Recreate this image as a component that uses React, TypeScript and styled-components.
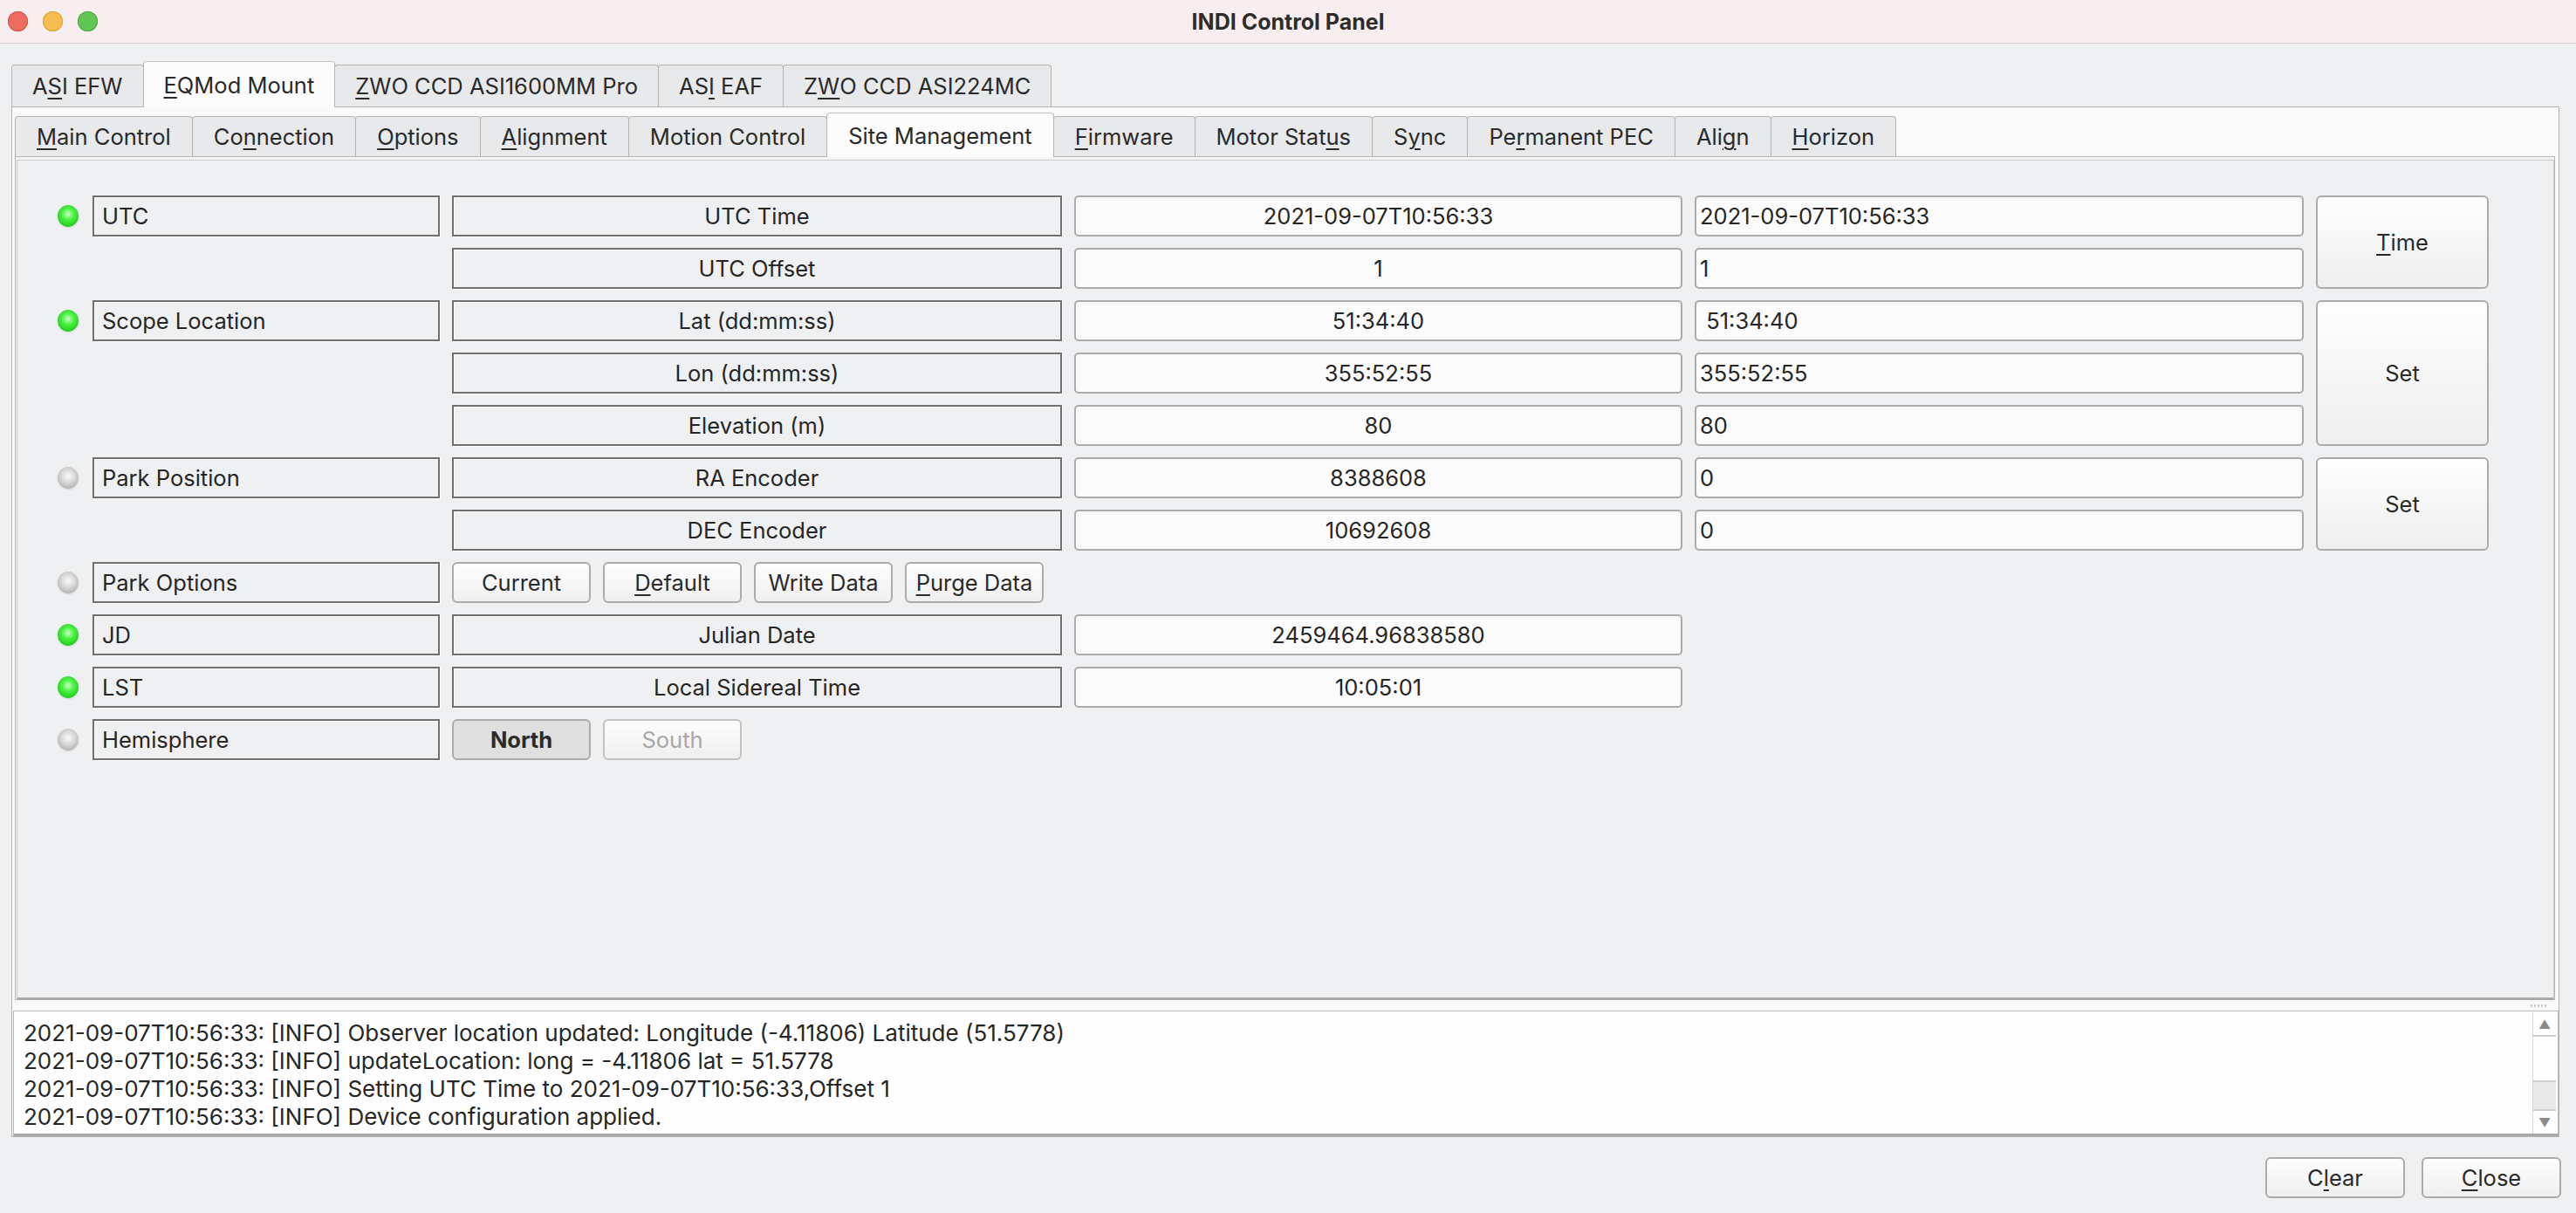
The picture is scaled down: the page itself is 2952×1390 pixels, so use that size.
import React from 'react';
import styled, { createGlobalStyle, css } from 'styled-components';

const GlobalStyle = createGlobalStyle`
  html, body {
    margin: 0;
    padding: 0;
    background: #eff0f2;
  }
  body {
    font-family: Inter, 'Liberation Sans', sans-serif;
    color: #262626;
  }
`;

const Window = styled.div`
  width: 2952px;
  height: 1390px;
  display: flex;
  flex-direction: column;
  background: #eff0f2;
  font-size: 25.5px;
  overflow: hidden;
`;

const TitleBar = styled.div`
  flex: none;
  height: 50px;
  display: grid;
  grid-template-columns: 1fr auto 1fr;
  align-items: center;
  background: #f8eef0;
  border-bottom: 1px solid #d3d1d2;
  box-sizing: border-box;
`;

const Lights = styled.div`
  display: flex;
  gap: 17px;
  padding-left: 9px;
`;

const Light = styled.span<{ $c: string; $b: string }>`
  width: 23px;
  height: 23px;
  border-radius: 50%;
  background: ${(p) => p.$c};
  box-shadow: inset 0 0 0 1px ${(p) => p.$b};
`;

const Title = styled.div`
  font-weight: 700;
  font-size: 25px;
  color: #2d2d2d;
`;

const Body = styled.div`
  flex: 1;
  display: flex;
  flex-direction: column;
  padding: 21px 19px 0 13px;
  min-height: 0;
`;

const TabBar = styled.div<{ $h: number }>`
  flex: none;
  display: flex;
  align-items: flex-end;
  height: ${(p) => p.$h}px;
  position: relative;
  z-index: 1;
`;

const Tab = styled.div<{ $active?: boolean; $h: number; $pad: number }>`
  box-sizing: border-box;
  height: ${(p) => (p.$active ? p.$h + 4 : p.$h)}px;
  padding: 0 ${(p) => p.$pad}px;
  display: flex;
  align-items: center;
  white-space: pre;
  border: 1px solid #b4b4b4;
  border-bottom: none;
  border-radius: 4px 4px 0 0;
  margin-right: -1px;
  background: ${(p) => (p.$active ? '#fcfcfc' : '#e8e9ea')};
  color: #2a2a2a;
  ${(p) =>
    p.$active &&
    css`
      margin-bottom: -1px;
      height: ${p.$h + 5}px;
      border-top-color: #c4c4c4;
    `}
`;

const Mn = styled.span`
  text-decoration: underline;
  text-decoration-thickness: 2px;
  text-underline-offset: 4px;
`;

const OuterPane = styled.div`
  flex: none;
  height: 1181px;
  box-sizing: border-box;
  border: 1px solid #b3b3b3;
  background: #fafafa;
  display: flex;
  flex-direction: column;
  padding: 6px 4px 0 3px;
`;

const InnerPane = styled.div`
  flex: 1;
  display: flex;
  flex-direction: column;
  border: 1px solid #b5b5b5;
  border-bottom: none;
  background: #f4f4f5;
  padding: 3px 0 0 1px;
  min-height: 0;
`;

const Panel = styled.div`
  flex: 1;
  border: 1px solid #cbcbcb;
  border-bottom: 3px solid #a9a9a9;
  background: #eff0f2;
  padding: 40px 0 0 44px;
`;

const Grid = styled.div`
  display: grid;
  grid-template-columns: 28px 398px 699px 697px 698px 198px;
  grid-auto-rows: 47px;
  column-gap: 14px;
  row-gap: 13px;
`;

const Led = styled.span<{ $row: number; $on?: boolean }>`
  grid-column: 1;
  grid-row: ${(p) => p.$row};
  align-self: center;
  justify-self: center;
  width: 24px;
  height: 25px;
  border-radius: 50%;
  background: ${(p) =>
    p.$on
      ? 'radial-gradient(circle at 50% 42%, #c9ffc4 0%, #4cf246 35%, #22cc1f 75%, #5fb55c 100%)'
      : 'radial-gradient(circle at 50% 42%, #fafafa 0%, #d9d9d9 40%, #b0b0b0 80%, #c6c6c6 100%)'};
  box-shadow: 0 1px 2px rgba(0, 0, 0, 0.12);
`;

const etched = css`
  box-sizing: border-box;
  border: 2px solid #707072;
  box-shadow: 1px 1px 0 #ffffff, inset 1px 1px 0 #ffffff;
  background: #eff0f2;
  display: flex;
  align-items: center;
  white-space: pre;
`;

const GroupLabel = styled.div<{ $row: number }>`
  ${etched};
  grid-column: 2;
  grid-row: ${(p) => p.$row};
  padding-left: 9px;
`;

const PropName = styled.div<{ $row: number }>`
  ${etched};
  grid-column: 3;
  grid-row: ${(p) => p.$row};
  justify-content: center;
`;

const field = css`
  box-sizing: border-box;
  border: 2px solid #ababab;
  border-radius: 5px;
  background: #fbfbfb;
  display: flex;
  align-items: center;
  white-space: pre;
`;

const Value = styled.div<{ $row: number }>`
  ${field};
  grid-column: 4;
  grid-row: ${(p) => p.$row};
  justify-content: center;
`;

const Input = styled.div<{ $row: number }>`
  ${field};
  grid-column: 5;
  grid-row: ${(p) => p.$row};
  padding-left: 4px;
`;

const Button = styled.button<{ $pressed?: boolean; $w?: number }>`
  box-sizing: border-box;
  font: inherit;
  color: #2a2a2a;
  border: 2px solid #ababab;
  border-radius: 6px;
  background: linear-gradient(#fefefe, #efefef);
  display: flex;
  align-items: center;
  justify-content: center;
  padding: 0;
  white-space: pre;
  ${(p) => p.$w && `width: ${p.$w}px;`}
  ${(p) =>
    p.$pressed &&
    css`
      background: #dfdfdf;
      font-weight: 700;
    `}
  &:disabled {
    color: #a8a8a8;
    border-color: #c2c2c2;
  }
`;

const ActionButton = styled(Button)<{ $row: number; $span: number }>`
  grid-column: 6;
  grid-row: ${(p) => p.$row} / span ${(p) => p.$span};
`;

const ButtonGroup = styled.div<{ $row: number }>`
  grid-column: 3;
  grid-row: ${(p) => p.$row};
  display: flex;
  gap: 14px;
`;

const Splitter = styled.div`
  flex: none;
  height: 12px;
  display: flex;
  justify-content: flex-end;
  align-items: center;
  padding-right: 10px;
`;

const Grip = styled.span`
  width: 18px;
  height: 3px;
  background: repeating-linear-gradient(90deg, #c8c8c8 0 2px, transparent 2px 4px);
`;

const LogPane = styled.div`
  flex: none;
  height: 144px;
  box-sizing: border-box;
  margin: 0 -4px 0 -2px;
  border: 1px solid #b8b8b8;
  border-bottom: 3px solid #a9a9a9;
  background: #fefefe;
  display: flex;
`;

const LogText = styled.div`
  flex: 1;
  padding: 9px 0 0 11px;
  font-size: 26px;
  line-height: 32px;
  white-space: pre;
`;

const ScrollBar = styled.div`
  width: 26px;
  display: flex;
  flex-direction: column;
  border-left: 1px solid #d8d8d8;
  margin: 1px 2px 0 0;
`;

const Arrow = styled.div`
  height: 26px;
  display: flex;
  align-items: center;
  justify-content: center;
  color: #8a8a8a;
  font-size: 14px;
`;

const Track = styled.div`
  flex: 1;
  display: flex;
  flex-direction: column;
  justify-content: flex-end;
  border-top: 2px solid #cfcfcf;
  border-bottom: 2px solid #cfcfcf;
`;

const Thumb = styled.div`
  height: 31px;
  background: #e9e9e9;
  border-top: 2px solid #cfcfcf;
`;

const Footer = styled.div`
  flex: 1;
  display: flex;
  justify-content: flex-end;
  align-items: flex-start;
  gap: 19px;
  padding-top: 23px;
  margin-right: -2px;
`;

const FooterButton = styled(Button)`
  width: 160px;
  height: 47px;
`;

const outerTabs: { label: React.ReactNode; active?: boolean }[] = [
  { label: <>A<Mn>S</Mn>I EFW</> },
  { label: <><Mn>E</Mn>QMod Mount</>, active: true },
  { label: <><Mn>Z</Mn>WO CCD ASI1600MM Pro</> },
  { label: <>AS<Mn>I</Mn> EAF</> },
  { label: <>Z<Mn>W</Mn>O CCD ASI224MC</> },
];

const innerTabs: { label: React.ReactNode; active?: boolean }[] = [
  { label: <><Mn>M</Mn>ain Control</> },
  { label: <>Co<Mn>n</Mn>nection</> },
  { label: <><Mn>O</Mn>ptions</> },
  { label: <><Mn>A</Mn>lignment</> },
  { label: <>Motion Control</> },
  { label: <>Site Management</>, active: true },
  { label: <><Mn>F</Mn>irmware</> },
  { label: <>Motor Stat<Mn>u</Mn>s</> },
  { label: <>S<Mn>y</Mn>nc</> },
  { label: <>Pe<Mn>r</Mn>manent PEC</> },
  { label: <>Ali<Mn>g</Mn>n</> },
  { label: <><Mn>H</Mn>orizon</> },
];

type Prop = { row: number; name: string; value: string; input: string };

const numbers: Prop[] = [
  { row: 1, name: 'UTC Time', value: '2021-09-07T10:56:33', input: '2021-09-07T10:56:33' },
  { row: 2, name: 'UTC Offset', value: '1', input: '1' },
  { row: 3, name: 'Lat (dd:mm:ss)', value: '51:34:40', input: ' 51:34:40' },
  { row: 4, name: 'Lon (dd:mm:ss)', value: '355:52:55', input: '355:52:55' },
  { row: 5, name: 'Elevation (m)', value: '80', input: '80' },
  { row: 6, name: 'RA Encoder', value: '8388608', input: '0' },
  { row: 7, name: 'DEC Encoder', value: '10692608', input: '0' },
];

const groups: { row: number; label: string; on: boolean }[] = [
  { row: 1, label: 'UTC', on: true },
  { row: 3, label: 'Scope Location', on: true },
  { row: 6, label: 'Park Position', on: false },
  { row: 8, label: 'Park Options', on: false },
  { row: 9, label: 'JD', on: true },
  { row: 10, label: 'LST', on: true },
  { row: 11, label: 'Hemisphere', on: false },
];

const logLines = [
  '2021-09-07T10:56:33: [INFO] Observer location updated: Longitude (-4.11806) Latitude (51.5778)',
  '2021-09-07T10:56:33: [INFO] updateLocation: long = -4.11806 lat = 51.5778',
  '2021-09-07T10:56:33: [INFO] Setting UTC Time to 2021-09-07T10:56:33,Offset 1',
  '2021-09-07T10:56:33: [INFO] Device configuration applied.',
];

const App = () => (
  <>
    <GlobalStyle />
    <Window>
      <TitleBar>
        <Lights>
          <Light $c="#ee6b60" $b="#d9574d" />
          <Light $c="#f6be50" $b="#dea53a" />
          <Light $c="#62c655" $b="#51ad45" />
        </Lights>
        <Title>INDI Control Panel</Title>
        <div />
      </TitleBar>
      <Body>
        <TabBar $h={51}>
          {outerTabs.map((t, i) => (
            <Tab key={i} $h={48} $pad={23} $active={t.active}>
              <span>{t.label}</span>
            </Tab>
          ))}
        </TabBar>
        <OuterPane>
          <TabBar $h={50}>
            {innerTabs.map((t, i) => (
              <Tab key={i} $h={46} $pad={24} $active={t.active}>
                <span>{t.label}</span>
              </Tab>
            ))}
          </TabBar>
          <InnerPane>
            <Panel>
              <Grid>
                {groups.map((g) => (
                  <React.Fragment key={g.row}>
                    <Led $row={g.row} $on={g.on} />
                    <GroupLabel $row={g.row}>{g.label}</GroupLabel>
                  </React.Fragment>
                ))}
                {numbers.map((n) => (
                  <React.Fragment key={n.row}>
                    <PropName $row={n.row}>{n.name}</PropName>
                    <Value $row={n.row}>{n.value}</Value>
                    <Input $row={n.row}>{n.input}</Input>
                  </React.Fragment>
                ))}
                <ActionButton $row={1} $span={2}>
                  <span><Mn>T</Mn>ime</span>
                </ActionButton>
                <ActionButton $row={3} $span={3}>Set</ActionButton>
                <ActionButton $row={6} $span={2}>Set</ActionButton>
                <ButtonGroup $row={8}>
                  <Button $w={159}>Current</Button>
                  <Button $w={159}><span><Mn>D</Mn>efault</span></Button>
                  <Button $w={159}>Write Data</Button>
                  <Button $w={159}><span><Mn>P</Mn>urge Data</span></Button>
                </ButtonGroup>
                <PropName $row={9}>Julian Date</PropName>
                <Value $row={9}>2459464.96838580</Value>
                <PropName $row={10}>Local Sidereal Time</PropName>
                <Value $row={10}>10:05:01</Value>
                <ButtonGroup $row={11}>
                  <Button $w={159} $pressed>North</Button>
                  <Button $w={159} disabled>South</Button>
                </ButtonGroup>
              </Grid>
            </Panel>
          </InnerPane>
          <Splitter>
            <Grip />
          </Splitter>
          <LogPane>
            <LogText>
              {logLines.map((l, i) => (
                <div key={i}>{l}</div>
              ))}
            </LogText>
            <ScrollBar>
              <Arrow>▲</Arrow>
              <Track>
                <Thumb />
              </Track>
              <Arrow>▼</Arrow>
            </ScrollBar>
          </LogPane>
        </OuterPane>
        <Footer>
          <FooterButton>
            <span>C<Mn>l</Mn>ear</span>
          </FooterButton>
          <FooterButton>
            <span><Mn>C</Mn>lose</span>
          </FooterButton>
        </Footer>
      </Body>
    </Window>
  </>
);

export default App;
